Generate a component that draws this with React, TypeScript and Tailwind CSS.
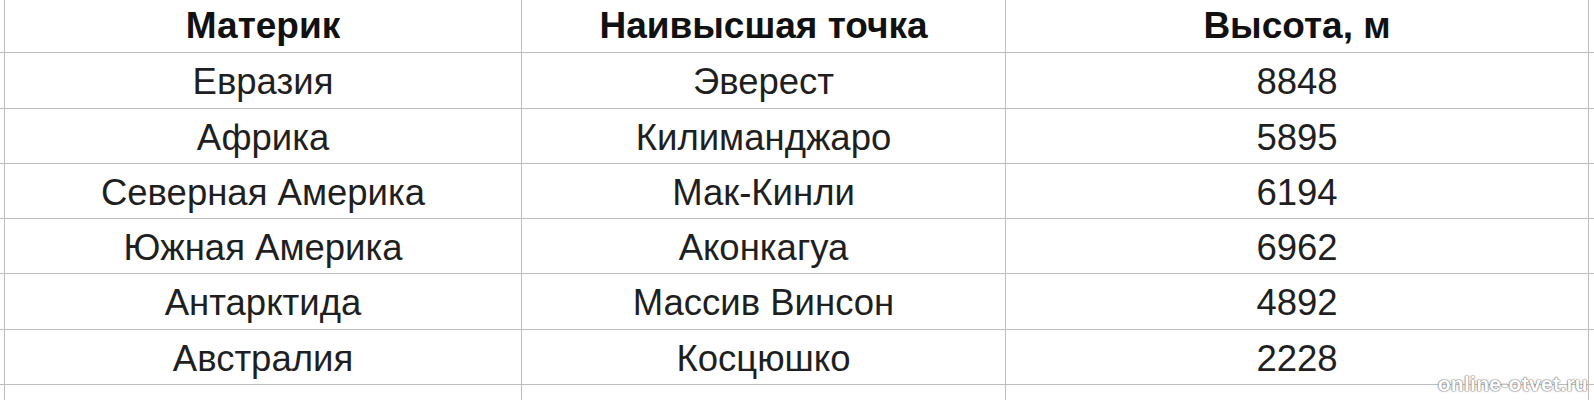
const rows = [
  { continent: 'Евразия', peak: 'Эверест', height: '8848', h: 'h-[56px]' },
  { continent: 'Африка', peak: 'Килиманджаро', height: '5895', h: 'h-[55px]' },
  { continent: 'Северная Америка', peak: 'Мак-Кинли', height: '6194', h: 'h-[55px]' },
  { continent: 'Южная Америка', peak: 'Аконкагуа', height: '6962', h: 'h-[55px]' },
  { continent: 'Антарктида', peak: 'Массив Винсон', height: '4892', h: 'h-[56px]' },
  { continent: 'Австралия', peak: 'Косцюшко', height: '2228', h: 'h-[55px]' },
];

const cell = 'flex items-center justify-center border-r border-b border-[#bdbdbd]';

export default function App() {
  return (
    <div className="relative w-[1594px] h-[400px] overflow-hidden bg-white font-['Liberation_Sans',Arial,sans-serif]">
      <div className="grid grid-cols-[5px_517px_484px_583px_1fr]">
        {/* header */}
        <div className={`${cell} h-[53px]`} />
        <div className={`${cell} h-[53px] text-[37px] font-bold text-[#111]`}>Материк</div>
        <div className={`${cell} h-[53px] text-[37px] font-bold text-[#111]`}>Наивысшая точка</div>
        <div className={`${cell} h-[53px] text-[37px] font-bold text-[#111]`}>Высота, м</div>
        <div className="h-[53px] border-b border-[#bdbdbd]" />

        {rows.map((r) => (
          <div key={r.continent} className="contents">
            <div className={`${cell} ${r.h}`} />
            <div className={`${cell} ${r.h} text-[36.5px] text-[#1f1f1f] pt-1`}>{r.continent}</div>
            <div className={`${cell} ${r.h} text-[36.5px] text-[#1f1f1f] pt-1`}>{r.peak}</div>
            <div className={`${cell} ${r.h} text-[36.5px] text-[#1f1f1f] pt-1`}>{r.height}</div>
            <div className={`${r.h} border-b border-[#bdbdbd]`} />
          </div>
        ))}

        <div className={`${cell} h-[40px]`} />
        <div className={`${cell} h-[40px]`} />
        <div className={`${cell} h-[40px]`} />
        <div className={`${cell} h-[40px]`} />
        <div className="h-[40px]" />
      </div>

      <span className="absolute right-[6px] bottom-[6px] text-[21px] tracking-[0.3px] leading-none font-bold text-white [text-shadow:0_0_2px_#777,0_0_1px_#777,0_0_1px_#777]">
        online-otvet.ru
      </span>
    </div>
  );
}
